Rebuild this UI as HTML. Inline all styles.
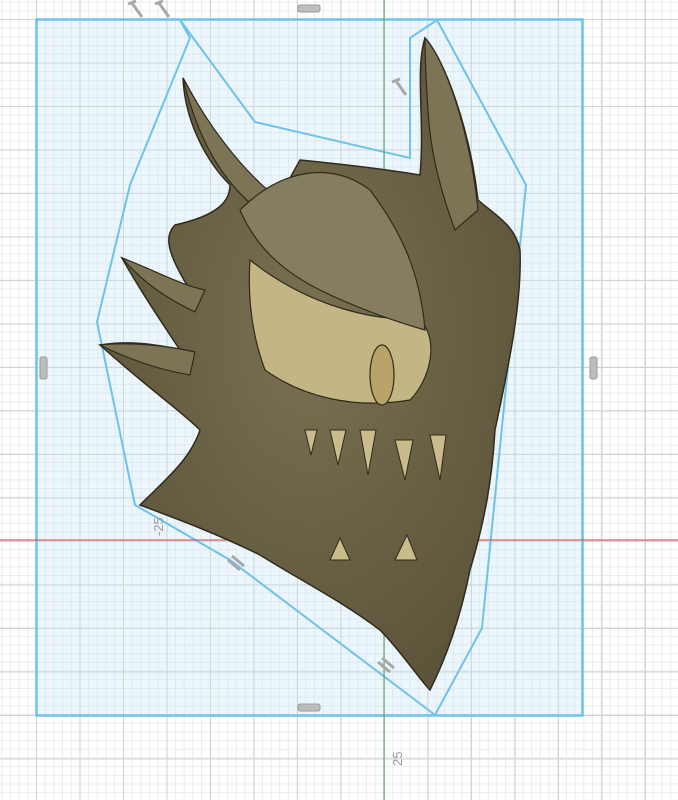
<!DOCTYPE html>
<html><head><style>
html,body{margin:0;padding:0;width:678px;height:800px;overflow:hidden;background:#fff}
.g{position:absolute;left:0;top:0;width:678px;height:800px;
background-image:
linear-gradient(#d2d2d2 1px,transparent 1px),
linear-gradient(90deg,#d2d2d2 1px,transparent 1px),
linear-gradient(#ebebeb 1px,transparent 1px),
linear-gradient(90deg,#ebebeb 1px,transparent 1px);
background-size:43.5px 43.5px,43.5px 43.5px,8.7px 8.7px,8.7px 8.7px;
background-position:36px 19px,36px 19px,36px 19px,36px 19px}
</style></head><body>
<div class="g"></div>
<svg width="678" height="800" style="position:absolute;left:0;top:0">
<defs>
<radialGradient id="sk" cx="0.5" cy="0.45" r="0.6">
<stop offset="0" stop-color="#7a7052"/><stop offset="1" stop-color="#5c5439"/>
</radialGradient>
</defs>
<rect x="36.5" y="19.5" width="546" height="696" fill="rgba(200,230,250,0.35)" stroke="#6ec3e8" stroke-width="2.5"/>
<polygon points="180,20 190,38 130,185 97,322 135,505 230,560 435,715 482,628 526,185 437,20 410,38 410,158 255,122" fill="none" stroke="#6ec3e8" stroke-width="2"/>
<line x1="0" y1="540" x2="678" y2="540" stroke="#d04040" stroke-width="1"/>
<line x1="384" y1="0" x2="384" y2="800" stroke="#50a050" stroke-width="1"/>
<g fill="url(#sk)" stroke="#2f2a1c" stroke-width="1.5">
<path d="M183,78 C200,110 230,160 275,205 L300,160 C350,165 390,170 420,175 C425,120 415,70 425,38 C445,60 470,130 478,200 C495,215 515,225 520,250 C522,300 510,360 495,430 C492,480 485,520 470,570 C460,620 445,660 430,690 C420,680 400,650 380,630 C340,600 300,580 260,555 C220,535 180,520 140,505 C165,480 190,460 200,430 C180,410 150,390 100,345 C130,340 160,345 180,350 C160,320 140,290 122,258 C150,270 175,285 190,290 C165,250 165,235 175,225 C220,215 230,200 230,185 C205,160 185,120 183,78 Z"/>
</g>
<g fill="#7d7455" stroke="#2f2a1c" stroke-width="1.2">
<path d="M425,38 C445,60 470,130 478,210 L455,230 C440,190 430,150 428,110 C426,80 425,55 425,38Z"/>
<path d="M183,78 C205,120 240,170 280,200 L265,215 C230,190 200,150 183,78Z"/>
<path d="M122,258 C150,268 180,285 205,290 L195,312 C170,300 145,285 122,258Z"/>
<path d="M100,345 C130,342 165,345 195,352 L190,375 C160,370 130,360 100,345Z"/>
<path d="M250,260 C300,300 360,320 420,320 C440,340 430,380 410,400 C350,410 300,395 265,370 C250,330 248,290 250,260Z" fill="#c4b585"/>
<ellipse cx="382" cy="375" rx="12" ry="30" fill="#b8a46a"/>
<path d="M240,210 C280,170 330,160 370,190 C400,230 420,270 425,330 C390,320 350,305 320,290 C280,270 255,245 240,210Z" fill="#857d5f"/>
</g>
<g fill="#c9bb8c" stroke="#2f2a1c" stroke-width="1">
<path d="M330,430 l8,35 l8,-35Z"/><path d="M360,430 l8,45 l8,-45Z"/><path d="M395,440 l10,40 l8,-40Z"/><path d="M430,435 l10,45 l6,-45Z"/><path d="M305,430 l6,25 l6,-25Z"/>
<path d="M395,560 l12,-25 l10,25Z"/><path d="M330,560 l10,-22 l10,22Z"/>
</g>
<g fill="#9a9a9a" font-family="Liberation Sans" font-size="13">
<text x="150" y="537" transform="rotate(-90 156 530)">-25</text>
<text x="398" y="778" transform="rotate(-90 394 770)">25</text>
</g>
<g fill="#bdbdbd" stroke="#9a9a9a">
<rect x="298" y="5" width="22" height="7" rx="2"/><rect x="298" y="704" width="22" height="7" rx="2"/>
<rect x="40" y="357" width="7" height="22" rx="2"/><rect x="590" y="357" width="7" height="22" rx="2"/>
</g>
<g stroke="#a8a8a8" stroke-width="3" fill="none">
<path d="M128,4 l8,-3 M132,3 l10,14"/><path d="M155,4 l8,-3 M159,3 l10,14"/>
<path d="M392,82 l8,-3 M396,81 l10,14"/>
<path d="M228,560 l12,10 M232,556 l12,10"/><path d="M378,662 l12,10 M382,658 l12,10"/>
</g>
</svg>
</body></html>
